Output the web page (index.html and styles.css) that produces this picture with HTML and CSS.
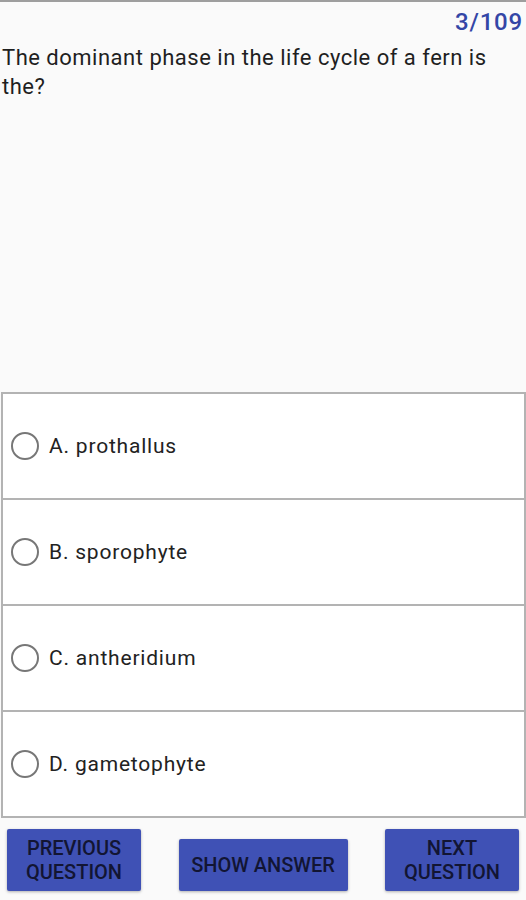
FILE: index.html
```html
<!DOCTYPE html>
<html lang="en">
<head>
  <meta charset="UTF-8" />
  <meta name="viewport" content="width=device-width, initial-scale=1.0" />
  <title>Quiz</title>
  <link rel="stylesheet" href="styles.css">
</head>
<body>
  <div class="screen">
    <div class="counter">3/109</div>
    <div class="question">The dominant phase in the life cycle of a fern is the?</div>

    <div class="options">
      <label class="option">
        <span class="radio"></span>
        <span>A. prothallus</span>
      </label>
      <label class="option">
        <span class="radio"></span>
        <span>B. sporophyte</span>
      </label>
      <label class="option">
        <span class="radio"></span>
        <span>C. antheridium</span>
      </label>
      <label class="option">
        <span class="radio"></span>
        <span>D. gametophyte</span>
      </label>
    </div>

    <div class="actions">
      <button class="btn btn-tall">PREVIOUS<br>QUESTION</button>
      <button class="btn btn-short">SHOW ANSWER</button>
      <button class="btn btn-tall">NEXT<br>QUESTION</button>
    </div>
  </div>
</body>
</html>
```

FILE: styles.css
```css
body {
  margin: 0;
  font-family: Roboto, "Noto Sans", sans-serif;
  background: #fafafa;
}
.screen {
  height: 900px;
  box-sizing: border-box;
  border-top: 2px solid #9e9e9e;
  display: flex;
  flex-direction: column;
}
.counter {
  text-align: right;
  color: #3446a6;
  font-size: 24px;
  font-weight: 500;
  letter-spacing: 0.8px;
  padding: 5px 3px 0 0;
  line-height: 30px;
}
.question {
  flex: 1;
  font-size: 22px;
  letter-spacing: 0.5px;
  line-height: 29px;
  color: #1f1f1f;
  padding: 6px 20px 0 2px;
}
.options {
  border: 2px solid #b3b3b3;
  border-bottom: none;
  margin: 0 0 0 1px;
  background: #fff;
}
.option {
  display: flex;
  align-items: center;
  height: 104px;
  border-bottom: 2px solid #b3b3b3;
  font-size: 21px;
  letter-spacing: 0.8px;
  color: #222;
  padding-left: 8px;
}
.radio {
  width: 24px;
  height: 24px;
  border: 2px solid #777;
  border-radius: 50%;
  margin-right: 10px;
  flex-shrink: 0;
}
.actions {
  height: 82px;
  box-sizing: border-box;
  display: flex;
  justify-content: space-between;
  align-items: flex-end;
  padding: 0 7px 9px 7px;
}
.btn {
  background: #3f51b5;
  color: #121533;
  border: none;
  border-radius: 2px;
  font-family: Roboto, sans-serif;
  font-weight: 500;
  font-size: 20px;
  line-height: 24px;
  box-shadow: 0 1px 3px rgba(0,0,0,0.3);
  padding: 0;
}
.btn-tall {
  width: 134px;
  height: 62px;
}
.btn-short {
  width: 169px;
  height: 52px;
}
```
